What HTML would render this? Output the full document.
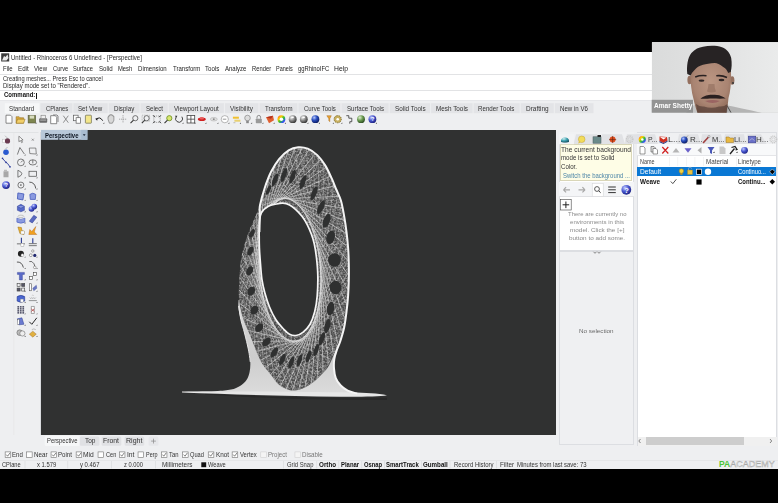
<!DOCTYPE html>
<html><head><meta charset="utf-8">
<style>
*{box-sizing:border-box;margin:0;padding:0}
html,body{width:778px;height:503px;overflow:hidden;background:#000}
body{position:relative;font-family:"Liberation Sans",sans-serif;color:#1a1a1a}
.a{position:absolute}
.t{position:absolute;white-space:nowrap;line-height:1;transform-origin:0 0}
svg{position:absolute;left:0;top:0}
</style></head><body>
<!-- app background -->
<div class="a" style="left:0;top:52px;width:778px;height:416.5px;background:#eeeff1"></div>
<!-- title + menu -->
<div class="a" style="left:0;top:52px;width:778px;height:21.5px;background:#fff"></div>
<!-- command area -->
<div class="a" style="left:0;top:73.5px;width:778px;height:27px;background:#fff"></div>
<div class="a" style="left:0;top:73.5px;width:778px;height:1px;background:#e2e3e5"></div>
<div class="a" style="left:0;top:89.5px;width:778px;height:1px;background:#e2e3e5"></div>
<div class="a" style="left:0;top:100px;width:778px;height:1px;background:#e6e7ea"></div>
<div class="a" style="left:36.3px;top:92.5px;width:0.8px;height:6.5px;background:#111"></div>
<!-- toolbar tabs -->
<div id="tabs"></div>
<!-- viewport -->
<div class="a" style="left:41px;top:130.2px;width:514.5px;height:304.8px;background:#303131"></div>
<!-- panel 1 -->
<div class="a" style="left:558.5px;top:132.3px;width:75.5px;height:118.7px;background:#fff;border:1px solid #dcdee2"></div>
<div class="a" style="left:558.5px;top:132.3px;width:75.5px;height:12px;background:#f0f1f3"></div>
<div class="a" style="left:560.3px;top:144.4px;width:72.2px;height:36.2px;background:#fefde6;border:1px solid #d9d6b8"></div>
<div class="a" style="left:559px;top:181.5px;width:74.5px;height:15.5px;background:#f4f5f7;border-bottom:1px solid #e0e1e4"></div>
<div class="a" style="left:558.5px;top:251px;width:75.5px;height:193.5px;background:#eff0f2;border:1px solid #dcdee2"></div>
<!-- panel 2 -->
<div class="a" style="left:636.7px;top:132.3px;width:140.3px;height:313.5px;background:#fff;border:1px solid #dcdee2"></div>
<div class="a" style="left:637.2px;top:132.8px;width:139.3px;height:11.2px;background:#eff0f2"></div>
<div class="a" style="left:637.2px;top:144px;width:139.3px;height:11.6px;background:#f8f9fa;border-bottom:0.6px solid #e4e5e8"></div>
<div class="a" style="left:636.7px;top:167.2px;width:139.5px;height:9.3px;background:#0a78d4"></div>
<div class="a" style="left:637.5px;top:437px;width:139px;height:8.5px;background:#f0f0f0"></div>
<div class="a" style="left:646px;top:437.3px;width:97.7px;height:7.5px;background:#cdcdcd"></div>
<!-- webcam -->
<div class="a" style="left:651.7px;top:42.2px;width:126.3px;height:70.5px;overflow:hidden;background:#dadbdb">
</div>
<svg id="ov" width="778" height="503" viewBox="0 0 778 503"><defs>
<radialGradient id="gs" cx="0.35" cy="0.3" r="0.75"><stop offset="0" stop-color="#f4f4f4"/><stop offset="0.5" stop-color="#8a8a8a"/><stop offset="1" stop-color="#303030"/></radialGradient>
<radialGradient id="bs" cx="0.35" cy="0.3" r="0.75"><stop offset="0" stop-color="#b8c8ff"/><stop offset="0.45" stop-color="#2a4fc0"/><stop offset="1" stop-color="#0a1a60"/></radialGradient>
<radialGradient id="hs" cx="0.35" cy="0.3" r="0.75"><stop offset="0" stop-color="#c0c8ff"/><stop offset="0.5" stop-color="#4a58d0"/><stop offset="1" stop-color="#1a2080"/></radialGradient>
<radialGradient id="grs" cx="0.35" cy="0.3" r="0.75"><stop offset="0" stop-color="#e0f0d0"/><stop offset="0.5" stop-color="#6a9a50"/><stop offset="1" stop-color="#2a4a20"/></radialGradient>
<radialGradient id="ts" cx="0.35" cy="0.3" r="0.8"><stop offset="0" stop-color="#d0f0f0"/><stop offset="0.5" stop-color="#3aa0b0"/><stop offset="1" stop-color="#1a5060"/></radialGradient>
<linearGradient id="rb" x1="0" y1="0" x2="1" y2="1"><stop offset="0" stop-color="#ff3030"/><stop offset="0.3" stop-color="#ffd000"/><stop offset="0.55" stop-color="#30c030"/><stop offset="0.8" stop-color="#3050ff"/><stop offset="1" stop-color="#c030c0"/></linearGradient>
</defs>
<path d="M6.00 115.20 H10.50 L12.00 116.70 V123.20 H6.00 Z" fill="#fff" stroke="#5a5a5a" stroke-width="0.7"/>
<path d="M16.10 116.70 h3 l1 1 h3.5 v5.5 h-7.5 Z" fill="#d9a83a" stroke="#8a6a20" stroke-width="0.5"/>
<path d="M16.10 123.20 l1.5 -4 h7.5 l-1.5 4 Z" fill="#f2cf6a" stroke="#8a6a20" stroke-width="0.5"/>
<rect x="28.10" y="115.40" width="7.6" height="7.6" fill="#7e8650" stroke="#4a4a30" stroke-width="0.5"/>
<rect x="29.70" y="115.60" width="4.4" height="3" fill="#d8dcc0"/>
<path d="M35.10 123.80 L36.50 122.40 L36.50 123.80 Z" fill="#444"/>
<rect x="39.20" y="118.20" width="8" height="4.5" rx="1" fill="#6a6a6a"/>
<rect x="41.00" y="115.20" width="4.4" height="3.5" fill="#eee" stroke="#666" stroke-width="0.5"/>
<rect x="40.20" y="119.50" width="6" height="1.2" fill="#aaa"/>
<path d="M53.00 115.00 h4 l1 1 v6" fill="none" stroke="#5a5a5a" stroke-width="0.7"/>
<path d="M50.70 115.70 H55.20 L56.70 117.20 V123.70 H50.70 Z" fill="#fff" stroke="#5a5a5a" stroke-width="0.7"/>
<path d="M63.30 115.70 L68.30 122.70 M68.30 115.70 L63.30 122.70" stroke="#777" stroke-width="0.8"/>
<rect x="73.60" y="115.20" width="4.5" height="5.5" fill="#fff" stroke="#5a5a5a" stroke-width="0.7"/>
<rect x="76.10" y="117.70" width="4.5" height="5.5" fill="#fff" stroke="#5a5a5a" stroke-width="0.7"/>
<rect x="85.40" y="115.20" width="6" height="8" rx="0.6" fill="#f3e68a" stroke="#6a6a50" stroke-width="0.7"/>
<path d="M96.20 119.70 Q99.70 115.70 102.70 120.70" fill="none" stroke="#222" stroke-width="1"/>
<path d="M95.20 118.70 l2.5 -1 l-0.5 3 Z" fill="#222"/>
<path d="M102.90 123.80 L104.30 122.40 L104.30 123.80 Z" fill="#444"/>
<path d="M108.00 119.20 v-2.5 h1 v-1.5 h1.3 v-0.5 h1.3 v0.5 h1.3 v1 h1 v4 l-1.5 3 h-3 Z" fill="#d8d8d8" stroke="#666" stroke-width="0.6"/>
<path d="M123.00 115.20 V123.20 M119.00 119.20 H127.00" stroke="#888" stroke-width="0.7" stroke-dasharray="1.2 0.8"/>
<circle cx="135.30" cy="118.20" r="2.6" fill="none" stroke="#555" stroke-width="0.8"/>
<path d="M133.50 120.10 L130.50 123.10" stroke="#333" stroke-width="1.1"/>
<circle cx="146.60" cy="118.20" r="2.6" fill="none" stroke="#555" stroke-width="0.8"/>
<path d="M144.80 120.10 L141.80 123.10" stroke="#333" stroke-width="1.1"/>
<rect x="142.10" y="115.20" width="7.5" height="6" fill="none" stroke="#888" stroke-width="0.5" stroke-dasharray="1 0.7"/>
<rect x="153.80" y="116.00" width="6.4" height="6.4" fill="none" stroke="#777" stroke-width="0.6" stroke-dasharray="1.2 0.8"/>
<path d="M153.00 115.20 l2 2 M161.00 115.20 l-2 2 M153.00 123.20 l2 -2 M161.00 123.20 l-2 -2" stroke="#333" stroke-width="0.9"/>
<circle cx="169.30" cy="118.20" r="2.6" fill="#d8e870" stroke="#6a8a20" stroke-width="0.8"/>
<path d="M167.50 120.10 L164.50 123.10" stroke="#333" stroke-width="1.1"/>
<path d="M175.90 117.20 A3.5 3.5 0 1 0 181.90 116.70" fill="none" stroke="#333" stroke-width="0.9"/>
<path d="M174.90 115.70 l2.5 0 l-1 2 Z" fill="#333"/>
<path d="M182.10 123.80 L183.50 122.40 L183.50 123.80 Z" fill="#444"/>
<rect x="187.10" y="115.40" width="7.6" height="7.6" fill="#fff" stroke="#444" stroke-width="0.8"/>
<path d="M190.90 115.40 V123.00 M187.10 119.20 H194.70" stroke="#444" stroke-width="0.8"/>
<path d="M194.10 123.80 L195.50 122.40 L195.50 123.80 Z" fill="#444"/>
<ellipse cx="201.80" cy="119.20" rx="4" ry="1.8" fill="#d02020"/>
<ellipse cx="201.80" cy="118.20" rx="2.2" ry="1.3" fill="#e86060"/>
<path d="M205.00 123.80 L206.40 122.40 L206.40 123.80 Z" fill="#444"/>
<ellipse cx="213.80" cy="119.20" rx="3.5" ry="1.8" fill="#ddd" stroke="#aaa" stroke-width="0.5"/>
<circle cx="213.80" cy="119.20" r="0.9" fill="#888"/>
<path d="M217.00 123.80 L218.40 122.40 L218.40 123.80 Z" fill="#444"/>
<circle cx="224.80" cy="119.20" r="3.6" fill="#fff" stroke="#888" stroke-width="0.6"/>
<path d="M222.80 119.20 H226.30" stroke="#555" stroke-width="0.6"/>
<path d="M228.00 123.80 L229.40 122.40 L229.40 123.80 Z" fill="#444"/>
<rect x="232.90" y="116.70" width="6" height="2" fill="#f0c030"/>
<rect x="234.40" y="119.70" width="6" height="2" fill="#e8d070"/>
<path d="M233.40 122.70 h2" stroke="#999" stroke-width="0.6"/>
<path d="M239.60 123.80 L241.00 122.40 L241.00 123.80 Z" fill="#444"/>
<circle cx="247.50" cy="118.00" r="2.8" fill="#ddd" stroke="#777" stroke-width="0.6"/>
<rect x="246.20" y="120.70" width="2.6" height="2.5" fill="#888"/>
<path d="M250.70 123.80 L252.10 122.40 L252.10 123.80 Z" fill="#444"/>
<path d="M257.00 118.70 v-1.5 a1.8 1.8 0 0 1 3.6 0 v1.5" fill="none" stroke="#777" stroke-width="0.8"/>
<rect x="255.80" y="118.70" width="6" height="4.5" rx="0.6" fill="#9a9a9a"/>
<path d="M262.00 123.80 L263.40 122.40 L263.40 123.80 Z" fill="#444"/>
<path d="M266.00 117.20 L273.00 115.70 L274.00 120.20 L269.00 123.20 Z" fill="#e06030"/>
<path d="M266.00 117.20 L273.00 115.70 L271.00 118.70 Z" fill="#b03020"/>
<path d="M273.20 123.80 L274.60 122.40 L274.60 123.80 Z" fill="#444"/>
<circle cx="281.40" cy="119.20" r="3.9" fill="url(#rb)"/>
<circle cx="281.40" cy="119.20" r="1.8" fill="#fff"/>
<path d="M284.60 123.80 L286.00 122.40 L286.00 123.80 Z" fill="#444"/>
<circle cx="292.70" cy="119.20" r="3.9" fill="url(#gs)"/>
<rect x="291.70" y="116.60" width="2" height="1.4" fill="#fff"/>
<circle cx="303.80" cy="119.20" r="3.9" fill="url(#gs)"/>
<rect x="302.80" y="116.60" width="2" height="1.4" fill="#fff"/>
<path d="M307.00 123.80 L308.40 122.40 L308.40 123.80 Z" fill="#444"/>
<circle cx="315.40" cy="119.20" r="3.9" fill="url(#bs)"/>
<path d="M318.60 123.80 L320.00 122.40 L320.00 123.80 Z" fill="#444"/>
<path d="M326.80 115.70 h4.5 l-1.5 3 v3 l-1 -1 v-2 Z" fill="#e8a030" stroke="#a06010" stroke-width="0.4"/>
<path d="M332.50 123.80 L333.90 122.40 L333.90 123.80 Z" fill="#444"/>
<circle cx="337.70" cy="119.20" r="3.6" fill="#c8b060" stroke="#7a6a30" stroke-width="1" stroke-dasharray="1 0.8"/>
<circle cx="337.70" cy="119.20" r="1.3" fill="#fff"/>
<path d="M340.90 123.80 L342.30 122.40 L342.30 123.80 Z" fill="#444"/>
<path d="M346.30 115.70 h2.5 v2.5 h3 v3.5 h-2 v2" fill="none" stroke="#333" stroke-width="0.8"/>
<circle cx="361.00" cy="119.20" r="3.9" fill="url(#grs)"/>
<circle cx="372.40" cy="119.20" r="3.9" fill="url(#hs)"/>
<text x="370.90" y="121.30" font-size="5.6" font-weight="bold" fill="#fff" font-family="Liberation Sans">?</text>
<path d="M375.60 123.80 L377.00 122.40 L377.00 123.80 Z" fill="#444"/>
<rect x="2.5" y="139.2" width="4" height="3.5" fill="#fff" stroke="#bbb" stroke-width="0.5"/>
<circle cx="7.5" cy="140.89999999999998" r="2.6" fill="#6a3a50"/>
<path d="M5.0 135.7 l2 2 l-1 1.5" stroke="#999" stroke-width="0.6" fill="none"/>
<circle cx="6.0" cy="152.24999999999997" r="2.8" fill="#2a5ad0"/>
<path d="M4.5 150.04999999999998 l3 -3" stroke="#bbb" stroke-width="1"/>
<path d="M2.5 158.39999999999998 L6.0 162.39999999999998 L7.5 163.39999999999998 L10.0 166.89999999999998" fill="none" stroke="#2a3a9a" stroke-width="0.9"/>
<circle cx="2.5" cy="158.39999999999998" r="0.8" fill="#2a3a9a"/><circle cx="6.0" cy="162.39999999999998" r="0.8" fill="#2a3a9a"/><circle cx="10.0" cy="166.89999999999998" r="0.8" fill="#2a3a9a"/>
<rect x="3.5" y="171.25" width="5" height="6" fill="#a8a8a8"/><rect x="4.0" y="169.75" width="3" height="1.3" fill="#bbb"/>
<circle cx="6.0" cy="185.1" r="3.9" fill="url(#hs)"/>
<text x="4.5" y="187.2" font-size="5.6" font-weight="bold" fill="#fff" font-family="Liberation Sans">?</text>
<path d="M18.9 136.2 L18.9 141.7 L20.4 140.5 L21.7 142.7 L22.5 142.2 L21.4 140.2 L23.099999999999998 140.0 Z" fill="#fff" stroke="#4a4a4a" stroke-width="0.6"/>
<path d="M31.799999999999997 138.7 l2 2 M33.8 138.7 l-2 2" stroke="#666" stroke-width="0.6"/>
<path d="M17.4 154.54999999999998 L19.9 147.54999999999998 L24.4 154.04999999999998" fill="none" stroke="#4a4a4a" stroke-width="0.7"/>
<path d="M29.299999999999997 148.04999999999998 L35.8 148.04999999999998 L36.3 154.04999999999998 L29.799999999999997 153.54999999999998 Z" fill="none" stroke="#4a4a4a" stroke-width="0.6"/>
<path d="M24.30 155.45 L25.50 154.25 L25.50 155.45 Z" fill="#333"/>
<path d="M36.20 155.45 L37.40 154.25 L37.40 155.45 Z" fill="#333"/>
<circle cx="20.9" cy="162.39999999999998" r="3.4" fill="none" stroke="#4a4a4a" stroke-width="0.7"/>
<path d="M20.9 162.39999999999998 l2 -2" fill="none" stroke="#4a4a4a" stroke-width="0.7"/>
<ellipse cx="32.8" cy="162.39999999999998" rx="3.8" ry="2.6" fill="none" stroke="#4a4a4a" stroke-width="0.7"/>
<path d="M32.8 159.79999999999998 V163.39999999999998" fill="none" stroke="#4a4a4a" stroke-width="0.7"/>
<path d="M24.30 166.80 L25.50 165.60 L25.50 166.80 Z" fill="#333"/>
<path d="M36.20 166.80 L37.40 165.60 L37.40 166.80 Z" fill="#333"/>
<path d="M17.9 170.25 V177.25 Q25.9 173.75 17.9 170.25" fill="none" stroke="#4a4a4a" stroke-width="0.7"/>
<rect x="28.999999999999996" y="171.25" width="7.6" height="5" fill="none" stroke="#4a4a4a" stroke-width="0.7"/>
<path d="M24.30 178.15 L25.50 176.95 L25.50 178.15 Z" fill="#333"/>
<path d="M36.20 178.15 L37.40 176.95 L37.40 178.15 Z" fill="#333"/>
<circle cx="20.9" cy="185.1" r="3" fill="none" stroke="#4a4a4a" stroke-width="0.7"/><circle cx="20.9" cy="185.1" r="0.8" fill="#4a4a4a"/>
<path d="M29.299999999999997 182.1 Q34.8 182.1 35.8 188.6" fill="none" stroke="#4a4a4a" stroke-width="0.9"/>
<path d="M24.30 189.50 L25.50 188.30 L25.50 189.50 Z" fill="#333"/>
<path d="M36.20 189.50 L37.40 188.30 L37.40 189.50 Z" fill="#333"/>
<path d="M17.9 192.95 L23.9 193.95 L22.9 199.95 L17.4 198.95 Z" fill="#8a9ae0" stroke="#3f55b8" stroke-width="0.8"/>
<path d="M29.799999999999997 194.45 Q32.8 191.95 35.8 194.45 L35.3 199.45 L30.299999999999997 199.45 Z" fill="#8a9ae0" stroke="#3f55b8" stroke-width="0.7"/>
<path d="M24.30 200.85 L25.50 199.65 L25.50 200.85 Z" fill="#333"/>
<path d="M36.20 200.85 L37.40 199.65 L37.40 200.85 Z" fill="#333"/>
<path d="M17.4 206.29999999999998 L20.9 204.29999999999998 L24.4 206.29999999999998 V210.29999999999998 L20.9 211.79999999999998 L17.4 210.29999999999998 Z" fill="#5468c8" stroke="#2a3a90" stroke-width="0.5"/>
<path d="M17.4 206.29999999999998 L20.9 208.1 L24.4 206.29999999999998" fill="#9aa8e8" stroke="#2a3a90" stroke-width="0.4"/>
<circle cx="31.499999999999996" cy="208.99999999999997" r="2.8" fill="url(#hs)"/><circle cx="34.3" cy="206.6" r="2.8" fill="url(#hs)"/>
<path d="M24.30 212.20 L25.50 211.00 L25.50 212.20 Z" fill="#333"/>
<path d="M36.20 212.20 L37.40 211.00 L37.40 212.20 Z" fill="#333"/>
<ellipse cx="20.9" cy="216.34999999999997" rx="3" ry="1.2" fill="none" stroke="#aaa" stroke-width="0.6"/>
<path d="M16.9 218.14999999999998 Q20.9 220.64999999999998 24.9 218.14999999999998 V222.14999999999998 Q20.9 224.14999999999998 16.9 222.14999999999998 Z" fill="#8a9ae0" stroke="#3f55b8" stroke-width="0.6"/>
<path d="M29.299999999999997 221.14999999999998 L33.8 215.34999999999997 L36.8 217.14999999999998 L32.3 222.95 Z" fill="#5a6ac0" stroke="#2a3a90" stroke-width="0.5"/>
<path d="M24.30 223.55 L25.50 222.35 L25.50 223.55 Z" fill="#333"/>
<path d="M36.20 223.55 L37.40 222.35 L37.40 223.55 Z" fill="#333"/>
<path d="M17.9 227.0 L21.4 227.5 L21.9 230.5 L24.4 231.5 L23.9 234.5 L19.9 233.5 Z" fill="#e8b030" stroke="#a07010" stroke-width="0.5"/>
<rect x="20.9" y="231.0" width="3.5" height="3" fill="#fff" stroke="#999" stroke-width="0.4"/>
<path d="M28.799999999999997 234.5 L29.799999999999997 229.5 L31.799999999999997 231.5 L35.8 226.5 L34.3 232.0 L36.8 234.5 Z" fill="#f0a020" stroke="#b06010" stroke-width="0.4"/>
<path d="M21.4 237.84999999999997 V243.34999999999997" fill="none" stroke="#2a3a90" stroke-width="1.1"/>
<path d="M16.9 243.84999999999997 H24.9" fill="none" stroke="#555" stroke-width="0.8"/>
<rect x="20.9" y="243.34999999999997" width="3" height="3" fill="#fff" stroke="#888" stroke-width="0.4"/>
<path d="M32.8 238.34999999999997 V243.34999999999997" fill="none" stroke="#2a3a90" stroke-width="1.1"/>
<path d="M28.799999999999997 243.64999999999998 H36.8 M28.799999999999997 245.64999999999998 H36.8" fill="none" stroke="#444" stroke-width="0.7"/>
<circle cx="20.9" cy="253.7" r="3" fill="#222"/><circle cx="22.4" cy="255.2" r="1.4" fill="#fff" stroke="#888" stroke-width="0.4"/>
<circle cx="30.799999999999997" cy="255.2" r="1.4" fill="#fff" stroke="#555" stroke-width="0.5"/><circle cx="34.8" cy="255.39999999999998" r="1.6" fill="#222a70"/><circle cx="32.8" cy="251.0" r="1.2" fill="#fff" stroke="#555" stroke-width="0.5"/>
<path d="M24.30 257.60 L25.50 256.40 L25.50 257.60 Z" fill="#333"/>
<path d="M36.20 257.60 L37.40 256.40 L37.40 257.60 Z" fill="#333"/>
<path d="M16.9 262.04999999999995 Q21.9 261.54999999999995 23.4 267.54999999999995" fill="none" stroke="#4a4a4a" stroke-width="0.9"/>
<path d="M29.299999999999997 261.54999999999995 L31.799999999999997 261.54999999999995 Q34.8 263.54999999999995 34.8 266.54999999999995" fill="none" stroke="#4a4a4a" stroke-width="0.8"/>
<circle cx="34.8" cy="267.34999999999997" r="1.3" fill="#fff" stroke="#555" stroke-width="0.5"/>
<path d="M24.30 268.95 L25.50 267.75 L25.50 268.95 Z" fill="#333"/>
<path d="M36.20 268.95 L37.40 267.75 L37.40 268.95 Z" fill="#333"/>
<path d="M17.4 272.4 H24.4 V274.4 H22.4 V279.9 H19.4 V274.4 H17.4 Z" fill="#5a6ac8" stroke="#2a3a90" stroke-width="0.4"/>
<rect x="29.299999999999997" y="276.4" width="3" height="3" fill="#fff" stroke="#444" stroke-width="0.6"/><rect x="33.3" y="272.4" width="3" height="3" fill="#fff" stroke="#444" stroke-width="0.6"/>
<path d="M32.3 276.4 L33.3 275.4" fill="none" stroke="#4a4a4a" stroke-width="0.5"/>
<path d="M24.30 280.30 L25.50 279.10 L25.50 280.30 Z" fill="#333"/>
<path d="M36.20 280.30 L37.40 279.10 L37.40 280.30 Z" fill="#333"/>
<rect x="17.099999999999998" y="283.45" width="3" height="3" fill="none" stroke="#444" stroke-width="0.6"/><rect x="21.7" y="283.45" width="3" height="3" fill="#556" stroke="#444" stroke-width="0.6"/><rect x="17.099999999999998" y="288.05" width="3" height="3" fill="#556" stroke="#444" stroke-width="0.6"/><rect x="21.7" y="288.05" width="3" height="3" fill="none" stroke="#444" stroke-width="0.6"/>
<rect x="29.299999999999997" y="283.75" width="2.2" height="7" fill="#fff" stroke="#555" stroke-width="0.6"/>
<path d="M32.8 288.25 L36.3 285.25 L36.8 288.25 L33.8 290.75 Z" fill="#6a78c8" stroke="#3a4a90" stroke-width="0.4"/>
<path d="M24.30 291.65 L25.50 290.45 L25.50 291.65 Z" fill="#333"/>
<path d="M36.20 291.65 L37.40 290.45 L37.40 291.65 Z" fill="#333"/>
<path d="M17.099999999999998 296.6 Q20.9 294.1 24.7 296.6 V301.1 Q20.9 303.6 17.099999999999998 301.1 Z" fill="#4a66d0" stroke="#1a2a80" stroke-width="0.5"/>
<rect x="20.4" y="299.1" width="3" height="3" fill="#fff" stroke="#888" stroke-width="0.4"/>
<path d="M28.799999999999997 300.6 H36.8" fill="none" stroke="#555" stroke-width="0.6"/>
<path d="M29.799999999999997 297.6 l1 1 l1 -1 l1 1 l1 -1 l1 1 l1 -1" fill="none" stroke="#777" stroke-width="0.5"/>
<path d="M31.799999999999997 295.6 Q32.8 294.6 33.8 295.6" fill="none" stroke="#aaa" stroke-width="0.5"/>
<path d="M24.30 303.00 L25.50 301.80 L25.50 303.00 Z" fill="#333"/>
<path d="M36.20 303.00 L37.40 301.80 L37.40 303.00 Z" fill="#333"/>
<rect x="17.4" y="306.1" width="1.7" height="1.5" fill="#4a4a60"/>
<rect x="17.4" y="308.1" width="1.7" height="1.5" fill="#4a4a60"/>
<rect x="17.4" y="310.1" width="1.7" height="1.5" fill="#4a4a60"/>
<rect x="17.4" y="312.1" width="1.7" height="1.5" fill="#4a4a60"/>
<rect x="19.9" y="306.1" width="1.7" height="1.5" fill="#4a4a60"/>
<rect x="19.9" y="308.1" width="1.7" height="1.5" fill="#4a4a60"/>
<rect x="19.9" y="310.1" width="1.7" height="1.5" fill="#4a4a60"/>
<rect x="19.9" y="312.1" width="1.7" height="1.5" fill="#4a4a60"/>
<rect x="22.4" y="306.1" width="1.7" height="1.5" fill="#4a4a60"/>
<rect x="22.4" y="308.1" width="1.7" height="1.5" fill="#4a4a60"/>
<rect x="22.4" y="310.1" width="1.7" height="1.5" fill="#4a4a60"/>
<rect x="22.4" y="312.1" width="1.7" height="1.5" fill="#4a4a60"/>
<path d="M31.299999999999997 306.45 H34.3 V313.45 H31.299999999999997 Z" fill="#fff" stroke="#555" stroke-width="0.5"/>
<path d="M31.299999999999997 308.95 L34.3 311.45 M31.299999999999997 311.45 L34.3 308.95" fill="none" stroke="#b03030" stroke-width="0.7"/>
<path d="M24.30 314.35 L25.50 313.15 L25.50 314.35 Z" fill="#333"/>
<path d="M36.20 314.35 L37.40 313.15 L37.40 314.35 Z" fill="#333"/>
<path d="M17.4 318.79999999999995 L21.9 317.79999999999995 L23.9 324.29999999999995 L18.9 324.79999999999995 Z" fill="#6a7ad0" stroke="#2a3a90" stroke-width="0.5"/>
<rect x="17.4" y="319.29999999999995" width="1.8" height="5" fill="#fff" stroke="#555" stroke-width="0.4"/>
<path d="M29.299999999999997 321.79999999999995 L31.799999999999997 324.29999999999995 L36.8 317.79999999999995" fill="none" stroke="#111" stroke-width="0.9"/>
<path d="M24.30 325.70 L25.50 324.50 L25.50 325.70 Z" fill="#333"/>
<path d="M36.20 325.70 L37.40 324.50 L37.40 325.70 Z" fill="#333"/>
<circle cx="19.7" cy="332.65" r="2.8" fill="#bbb" stroke="#555" stroke-width="0.5"/><circle cx="22.4" cy="333.45" r="2.6" fill="#eee" stroke="#555" stroke-width="0.5"/>
<path d="M29.299999999999997 334.15 L32.8 331.15 L36.3 334.15 L32.8 337.15 Z" fill="#e0b040" stroke="#906020" stroke-width="0.4"/>
<path d="M31.799999999999997 329.65 Q33.8 328.15 35.8 329.65" fill="none" stroke="#888" stroke-width="0.5"/>
<path d="M24.30 337.05 L25.50 335.85 L25.50 337.05 Z" fill="#333"/>
<path d="M36.20 337.05 L37.40 335.85 L37.40 337.05 Z" fill="#333"/>
<rect x="0" y="132.1" width="38.5" height="0.6" fill="#d9dadd"/>
<rect x="40" y="132" width="0.8" height="303" fill="#d4d6da"/>
<rect x="13.6" y="133" width="0.6" height="302" fill="#e3e4e7"/>
<rect x="1.2" y="53.3" width="8" height="8.2" fill="#3a3a3a"/>
<path d="M2 60.5 L4 56 L5.5 57 L7.5 54.5 L8.5 58 L6.5 60.5 Z" fill="#e8e8e8"/>
<text x="719" y="466.8" font-family="Liberation Sans" font-weight="bold" font-size="9.2" fill="#4cc436" textLength="11.2" lengthAdjust="spacingAndGlyphs">PA</text>
<text x="730.3" y="466.8" font-family="Liberation Sans" font-size="9.2" fill="#ffffff" stroke="#a8a8a8" stroke-width="0.45" textLength="44.5" lengthAdjust="spacingAndGlyphs">ACADEMY</text>
<defs>
<linearGradient id="flare" x1="0" y1="0" x2="0" y2="1"><stop offset="0" stop-color="#d8d8d8"/><stop offset="0.6" stop-color="#cdcdcd"/><stop offset="1" stop-color="#dcdcdc"/></linearGradient>
</defs>
<path d="M238.60 300.00 C238.58 301.43 238.12 305.30 238.50 308.60 C238.88 311.90 239.90 315.73 240.90 319.80 C241.90 323.87 243.23 327.97 244.50 333.00 C245.77 338.03 247.53 345.17 248.50 350.00 C249.47 354.83 250.12 358.33 250.30 362.00 C250.48 365.67 250.23 369.00 249.60 372.00 C248.97 375.00 248.10 377.67 246.50 380.00 C244.90 382.33 242.58 384.40 240.00 386.00 C237.42 387.60 235.17 388.73 231.00 389.60 C226.83 390.47 223.17 390.82 215.00 391.20 C206.83 391.58 187.50 391.78 182.00 391.90  L372 395.2 C369.53 394.93 361.25 394.35 357.20 393.60 C353.15 392.85 350.48 392.08 347.70 390.70 C344.92 389.32 342.48 387.38 340.50 385.30 C338.52 383.22 336.88 380.98 335.80 378.20 C334.72 375.42 334.25 371.80 334.00 368.60 C333.75 365.40 333.80 362.18 334.30 359.00 C334.80 355.82 335.97 352.67 337.00 349.50 C338.03 346.33 339.32 343.63 340.50 340.00 C341.68 336.37 343.10 332.40 344.10 327.70 C345.10 323.00 345.83 316.42 346.50 311.80 C347.17 307.18 347.83 301.97 348.10 300.00  Z" fill="url(#flare)"/>
<path d="M205 393.5 C260 396.5 330 398.5 387 397.8 L387 400 C330 400.5 260 398.5 205 394.5Z" fill="#1f2020" opacity="0.5"/>
<path d="M182 391.5 C230 391.3 300 391.8 352 392.6 C365 392.8 378 393.2 387 395.3 C380 396.6 360 397 340 396.8 C280 396 230 394.2 182 392.5 Z" fill="#e6e6e6"/>
<clipPath id="ringclip"><path d="M260.00 205.20 C261.10 201.48 262.95 193.27 264.80 187.70 C266.65 182.13 268.72 176.57 271.10 171.80 C273.48 167.03 276.18 162.68 279.10 159.10 C282.02 155.52 285.42 152.28 288.60 150.30 C291.78 148.32 295.02 147.47 298.20 147.20 C301.38 146.93 304.52 147.38 307.70 148.70 C310.88 150.02 314.38 152.32 317.30 155.10 C320.22 157.88 322.82 161.55 325.20 165.40 C327.58 169.25 329.75 174.18 331.60 178.20 C333.45 182.22 334.75 185.78 336.30 189.50 C337.85 193.22 339.60 196.10 340.90 200.50 C342.20 204.90 343.17 210.68 344.10 215.90 C345.03 221.12 345.83 226.50 346.50 231.80 C347.17 237.10 347.72 242.40 348.10 247.70 C348.48 253.00 348.68 258.22 348.80 263.60 C348.92 268.98 348.92 274.62 348.80 280.00 C348.68 285.38 348.48 290.60 348.10 295.90 C347.72 301.20 347.17 306.50 346.50 311.80 C345.83 317.10 345.18 322.67 344.10 327.70 C343.02 332.73 341.58 337.77 340.00 342.00 C338.42 346.23 336.50 349.07 334.60 353.10 C332.70 357.13 330.98 362.42 328.60 366.20 C326.22 369.98 323.28 372.82 320.30 375.80 C317.32 378.78 314.08 381.82 310.70 384.10 C307.32 386.38 303.45 388.48 300.00 389.50 C296.55 390.52 293.55 391.03 290.00 390.20 C286.45 389.37 281.92 387.12 278.70 384.50 C275.48 381.88 273.35 377.82 270.70 374.50 C268.05 371.18 264.95 367.92 262.80 364.60 C260.65 361.28 259.95 359.57 257.80 354.60 C255.65 349.63 252.20 340.40 249.90 334.80 C247.60 329.20 245.57 325.37 244.00 321.00 C242.43 316.63 241.37 312.78 240.50 308.60 C239.63 304.42 239.00 300.67 238.80 295.90 C238.60 291.13 238.95 285.92 239.30 280.00 C239.65 274.08 240.10 266.05 240.90 260.40 C241.70 254.75 242.77 250.87 244.10 246.10 C245.43 241.33 247.32 236.03 248.90 231.80 C250.48 227.57 252.05 224.33 253.60 220.70 C255.15 217.07 257.13 212.58 258.20 210.00 C259.27 207.42 258.90 208.92 260.00 205.20 Z"/></clipPath>
<filter id="nz" x="0" y="0" width="1" height="1"><feTurbulence type="fractalNoise" baseFrequency="0.55" numOctaves="2" seed="7"/><feColorMatrix type="matrix" values="0 0 0 0 0.85  0 0 0 0 0.85  0 0 0 0 0.85  1.3 0 0 0 -0.5"/></filter>
<path d="M260.00 205.20 C261.10 201.48 262.95 193.27 264.80 187.70 C266.65 182.13 268.72 176.57 271.10 171.80 C273.48 167.03 276.18 162.68 279.10 159.10 C282.02 155.52 285.42 152.28 288.60 150.30 C291.78 148.32 295.02 147.47 298.20 147.20 C301.38 146.93 304.52 147.38 307.70 148.70 C310.88 150.02 314.38 152.32 317.30 155.10 C320.22 157.88 322.82 161.55 325.20 165.40 C327.58 169.25 329.75 174.18 331.60 178.20 C333.45 182.22 334.75 185.78 336.30 189.50 C337.85 193.22 339.60 196.10 340.90 200.50 C342.20 204.90 343.17 210.68 344.10 215.90 C345.03 221.12 345.83 226.50 346.50 231.80 C347.17 237.10 347.72 242.40 348.10 247.70 C348.48 253.00 348.68 258.22 348.80 263.60 C348.92 268.98 348.92 274.62 348.80 280.00 C348.68 285.38 348.48 290.60 348.10 295.90 C347.72 301.20 347.17 306.50 346.50 311.80 C345.83 317.10 345.18 322.67 344.10 327.70 C343.02 332.73 341.58 337.77 340.00 342.00 C338.42 346.23 336.50 349.07 334.60 353.10 C332.70 357.13 330.98 362.42 328.60 366.20 C326.22 369.98 323.28 372.82 320.30 375.80 C317.32 378.78 314.08 381.82 310.70 384.10 C307.32 386.38 303.45 388.48 300.00 389.50 C296.55 390.52 293.55 391.03 290.00 390.20 C286.45 389.37 281.92 387.12 278.70 384.50 C275.48 381.88 273.35 377.82 270.70 374.50 C268.05 371.18 264.95 367.92 262.80 364.60 C260.65 361.28 259.95 359.57 257.80 354.60 C255.65 349.63 252.20 340.40 249.90 334.80 C247.60 329.20 245.57 325.37 244.00 321.00 C242.43 316.63 241.37 312.78 240.50 308.60 C239.63 304.42 239.00 300.67 238.80 295.90 C238.60 291.13 238.95 285.92 239.30 280.00 C239.65 274.08 240.10 266.05 240.90 260.40 C241.70 254.75 242.77 250.87 244.10 246.10 C245.43 241.33 247.32 236.03 248.90 231.80 C250.48 227.57 252.05 224.33 253.60 220.70 C255.15 217.07 257.13 212.58 258.20 210.00 C259.27 207.42 258.90 208.92 260.00 205.20 Z" fill="#4c4c4c"/>
<g clip-path="url(#ringclip)"><rect x="236" y="145" width="116" height="250" filter="url(#nz)"/></g>
<g clip-path="url(#ringclip)"><path d="M299.4 146.3L315.8 238.1M305.8 148.1L317.8 245.9M312.1 151.5L319.5 254.0M318.1 156.5L320.7 262.3M323.9 163.0L321.5 270.7M329.2 170.9L321.9 279.1M334.0 180.2L321.8 287.4M338.3 190.7L321.3 295.4M342.0 202.2L320.4 303.1M345.0 214.7L319.0 310.4M347.3 227.9L317.2 317.1M349.0 241.6L315.1 323.2M349.9 255.7L312.6 328.5M350.0 270.0L309.8 333.1M349.4 284.2L306.7 336.7M348.0 298.3L303.3 339.5M345.9 312.0L299.8 341.4M343.1 325.1L296.2 342.3M339.6 337.4L292.4 342.2M335.5 348.8L288.6 341.1M330.9 359.1L284.8 339.1M325.7 368.2L281.0 336.1M320.1 376.0L277.4 332.2M314.2 382.3L273.9 327.5M308.0 387.1L270.7 322.0M301.6 390.3L267.7 315.8M295.1 391.8L264.9 309.0M288.6 391.7L262.5 301.7M282.2 389.9L260.5 293.9M275.9 386.5L258.8 285.8M269.9 381.5L257.6 277.5M264.1 375.0L256.8 269.0M258.8 367.1L256.4 260.6M254.0 357.8L256.5 252.4M249.7 347.3L257.0 244.3M246.0 335.8L257.9 236.6M243.0 323.3L259.3 229.4M240.7 310.1L261.1 222.7M239.0 296.4L263.2 216.6M238.1 282.3L265.7 211.3M238.0 268.0L268.5 206.7M238.6 253.8L271.6 203.0M240.0 239.7L275.0 200.2M242.1 226.0L278.5 198.4M244.9 212.9L282.2 197.5M248.4 200.6L285.9 197.6M252.5 189.2L289.7 198.7M257.1 178.9L293.5 200.7M262.3 169.8L297.3 203.7M267.9 162.0L300.9 207.5M273.8 155.7L304.4 212.3M280.0 150.9L307.6 217.7M286.4 147.7L310.7 223.9M292.9 146.2L313.4 230.8" stroke="#d8d8d8" stroke-width="0.7" stroke-opacity="0.45" fill="none"/><path d="M296.1 146.0L257.5 239.7M302.6 147.0L258.7 232.3M309.0 149.6L260.3 225.3M315.2 153.8L262.3 219.0M321.0 159.5L264.7 213.3M326.6 166.8L267.4 208.5M331.6 175.4L270.3 204.4M336.2 185.3L273.6 201.2M340.2 196.3L277.0 199.0M343.6 208.4L280.7 197.7M346.3 221.2L284.4 197.4M348.3 234.7L288.2 198.1M349.5 248.6L292.0 199.8M350.0 262.8L295.8 202.4M349.8 277.1L299.4 205.9M348.8 291.3L303.0 210.2M347.0 305.2L306.3 215.4M344.6 318.6L309.5 221.3M341.4 331.3L312.3 227.9M337.6 343.2L314.8 235.1M333.3 354.1L317.0 242.7M328.3 363.8L318.8 250.6M323.0 372.3L320.3 258.9M317.2 379.3L321.2 267.3M311.1 384.9L321.8 275.7M304.8 388.9L321.9 284.0M298.4 391.3L321.6 292.2M291.9 392.0L320.8 300.1M285.4 391.0L319.6 307.5M279.0 388.4L318.0 314.4M272.8 384.2L316.0 320.8M267.0 378.5L313.7 326.4M261.4 371.2L311.0 331.3M256.4 362.6L308.0 335.3M251.8 352.7L304.7 338.5M247.8 341.7L301.3 340.7M244.4 329.6L297.7 342.0M241.7 316.8L293.9 342.3M239.7 303.3L290.1 341.7M238.5 289.4L286.3 340.0M238.0 275.2L282.6 337.4M238.2 260.9L278.9 333.9M239.2 246.7L275.3 329.5M241.0 232.8L272.0 324.3M243.4 219.4L268.9 318.4M246.6 206.7L266.0 311.9M250.4 194.8L263.5 304.7M254.7 183.9L261.3 297.1M259.7 174.2L259.5 289.1M265.0 165.7L258.1 280.9M270.8 158.7L257.1 272.5M276.9 153.1L256.5 264.1M283.2 149.1L256.4 255.7M289.6 146.7L256.7 247.6" stroke="#e4e4e4" stroke-width="0.8" stroke-opacity="0.7" fill="none"/>
<ellipse cx="268.5" cy="190" rx="1.76" ry="5.25" transform="rotate(25 268.5 190)" fill="#2f3030"/>
<ellipse cx="275.1" cy="179.8" rx="2.20" ry="6.83" transform="rotate(22 275.1 179.8)" fill="#2f3030"/>
<ellipse cx="283.9" cy="175" rx="2.31" ry="7.35" transform="rotate(20 283.9 175)" fill="#2f3030"/>
<ellipse cx="292.6" cy="176.6" rx="2.31" ry="7.35" transform="rotate(20 292.6 176.6)" fill="#2f3030"/>
<ellipse cx="302.9" cy="182.1" rx="2.42" ry="7.35" transform="rotate(20 302.9 182.1)" fill="#2f3030"/>
<ellipse cx="314.1" cy="193.3" rx="2.53" ry="7.35" transform="rotate(22 314.1 193.3)" fill="#2f3030"/>
<ellipse cx="321" cy="207.2" rx="2.75" ry="7.35" transform="rotate(25 321 207.2)" fill="#2f3030"/>
<ellipse cx="326.6" cy="220.7" rx="3.30" ry="7.35" transform="rotate(22 326.6 220.7)" fill="#2f3030"/>
<ellipse cx="330.6" cy="237.4" rx="4.18" ry="6.83" transform="rotate(15 330.6 237.4)" fill="#2f3030"/>
<ellipse cx="334.5" cy="260" rx="6.38" ry="6.72" transform="rotate(5 334.5 260)" fill="#2f3030"/>
<ellipse cx="335.5" cy="287.5" rx="5.94" ry="6.72" transform="rotate(-5 335.5 287.5)" fill="#2f3030"/>
<ellipse cx="330.6" cy="308.6" rx="3.63" ry="6.83" transform="rotate(10 330.6 308.6)" fill="#2f3030"/>
<ellipse cx="327.4" cy="326" rx="2.75" ry="7.35" transform="rotate(15 327.4 326)" fill="#2f3030"/>
<ellipse cx="321.8" cy="338.8" rx="2.42" ry="6.83" transform="rotate(20 321.8 338.8)" fill="#2f3030"/>
<ellipse cx="316.2" cy="350" rx="2.20" ry="6.30" transform="rotate(20 316.2 350)" fill="#2f3030"/>
<ellipse cx="308.5" cy="356.5" rx="2.20" ry="6.30" transform="rotate(20 308.5 356.5)" fill="#2f3030"/>
<ellipse cx="299.5" cy="360.3" rx="2.20" ry="6.30" transform="rotate(20 299.5 360.3)" fill="#2f3030"/>
<ellipse cx="291.3" cy="362.5" rx="2.20" ry="6.30" transform="rotate(20 291.3 362.5)" fill="#2f3030"/>
<ellipse cx="282.4" cy="359.5" rx="2.31" ry="6.30" transform="rotate(25 282.4 359.5)" fill="#2f3030"/>
<ellipse cx="274.3" cy="352.4" rx="2.64" ry="5.78" transform="rotate(35 274.3 352.4)" fill="#2f3030"/>
<ellipse cx="266.4" cy="342" rx="3.08" ry="5.25" transform="rotate(45 266.4 342)" fill="#2f3030"/>
<ellipse cx="259.2" cy="327.7" rx="3.52" ry="4.73" transform="rotate(40 259.2 327.7)" fill="#2f3030"/>
<ellipse cx="254.4" cy="310.2" rx="3.63" ry="4.73" transform="rotate(35 254.4 310.2)" fill="#2f3030"/>
<ellipse cx="251.2" cy="291.1" rx="3.52" ry="4.73" transform="rotate(30 251.2 291.1)" fill="#2f3030"/>
<ellipse cx="249.7" cy="270.8" rx="3.08" ry="4.73" transform="rotate(25 249.7 270.8)" fill="#2f3030"/>
<ellipse cx="250.4" cy="251" rx="2.64" ry="4.73" transform="rotate(25 250.4 251)" fill="#2f3030"/>
<ellipse cx="252" cy="233.4" rx="2.20" ry="4.73" transform="rotate(25 252 233.4)" fill="#2f3030"/>
</g>
<path d="M276.50 204.00 C279.00 203.45 280.83 203.03 283.00 203.20 C285.17 203.37 287.42 203.98 289.50 205.00 C291.58 206.02 293.42 207.42 295.50 209.30 C297.58 211.18 300.03 213.72 302.00 216.30 C303.97 218.88 305.75 221.85 307.30 224.80 C308.85 227.75 310.15 230.88 311.30 234.00 C312.45 237.12 313.33 239.50 314.20 243.50 C315.07 247.50 315.90 252.75 316.50 258.00 C317.10 263.25 317.68 268.67 317.80 275.00 C317.92 281.33 317.72 289.87 317.20 296.00 C316.68 302.13 315.92 307.05 314.70 311.80 C313.48 316.55 311.87 321.08 309.90 324.50 C307.93 327.92 305.22 330.47 302.90 332.30 C300.58 334.13 298.23 335.17 296.00 335.50 C293.77 335.83 291.53 335.33 289.50 334.30 C287.47 333.27 286.07 331.72 283.80 329.30 C281.53 326.88 278.28 323.52 275.90 319.80 C273.52 316.08 271.35 311.52 269.50 307.00 C267.65 302.48 266.05 297.20 264.80 292.70 C263.55 288.20 262.72 284.78 262.00 280.00 C261.28 275.22 260.93 269.33 260.50 264.00 C260.07 258.67 259.62 253.33 259.40 248.00 C259.18 242.67 259.17 236.50 259.20 232.00 C259.23 227.50 259.22 224.25 259.60 221.00 C259.98 217.75 260.10 214.92 261.50 212.50 C262.90 210.08 265.50 207.92 268.00 206.50 C270.50 205.08 274.00 204.55 276.50 204.00 Z" fill="#303131" stroke="#f6f6f6" stroke-width="1.7"/>
<path d="M259.40 232.00 C259.43 230.17 259.53 224.25 259.60 221.00 C259.67 217.75 259.73 215.13 259.80 212.50 C259.87 209.87 259.17 209.33 260.00 205.20 C260.83 201.07 262.95 193.27 264.80 187.70 C266.65 182.13 268.72 176.57 271.10 171.80 C273.48 167.03 276.18 162.68 279.10 159.10 C282.02 155.52 285.42 152.28 288.60 150.30 C291.78 148.32 295.02 147.47 298.20 147.20 C301.38 146.93 304.52 147.38 307.70 148.70 C310.88 150.02 314.38 152.32 317.30 155.10 C320.22 157.88 322.82 161.55 325.20 165.40 C327.58 169.25 329.75 174.18 331.60 178.20 C333.45 182.22 334.75 185.78 336.30 189.50 C337.85 193.22 339.60 196.10 340.90 200.50 C342.20 204.90 343.17 210.68 344.10 215.90 C345.03 221.12 345.83 226.50 346.50 231.80 C347.17 237.10 347.72 242.40 348.10 247.70 C348.48 253.00 348.68 258.22 348.80 263.60 C348.92 268.98 348.92 274.62 348.80 280.00 C348.68 285.38 348.48 290.60 348.10 295.90 C347.72 301.20 347.17 306.50 346.50 311.80 C345.83 317.10 345.18 322.67 344.10 327.70 C343.02 332.73 341.18 338.37 340.00 342.00 C338.82 345.63 337.95 346.67 337.00 349.50 C336.05 352.33 334.80 355.82 334.30 359.00 C333.80 362.18 333.75 365.40 334.00 368.60 C334.25 371.80 334.72 375.42 335.80 378.20 C336.88 380.98 338.52 383.22 340.50 385.30 C342.48 387.38 344.92 389.32 347.70 390.70 C350.48 392.08 355.62 393.12 357.20 393.60 " fill="none" stroke="#f4f4f4" stroke-width="2"/>
<path d="M238.60 306.00 C238.98 308.30 239.92 315.30 240.90 319.80 C241.88 324.30 243.23 327.97 244.50 333.00 C245.77 338.03 247.53 345.17 248.50 350.00 C249.47 354.83 250.00 360.00 250.30 362.00 " fill="none" stroke="#e8e8e8" stroke-width="1"/>
<path d="M573.5 144 L576 134.2 H597 L600 144 Z" fill="#e1e2e5"/>
<path d="M599.5 144 L602 134.2 H622 L625 144 Z" fill="#e1e2e5"/>
<path d="M624.5 144 L627 134.2 H641 L647 144 Z" fill="#e1e2e5"/>
<rect x="559" y="134.2" width="15" height="10" fill="#f2f3f5"/>
<path d="M561 141.8 A4 3.8 0 0 1 569 141.8 Z" fill="url(#ts)"/><ellipse cx="565" cy="141.6" rx="4" ry="1" fill="#1a6070"/>
<path d="M561 141.4 A4 4 0 0 1 569 141.4 Q565 143 561 141.4Z" fill="url(#ts)"/>
<circle cx="581.7" cy="139.3" r="3.3" fill="#f2dc5a" stroke="#c0a030" stroke-width="0.5"/><path d="M579 141.5 l-1 2 l2.5 -1Z" fill="#e0c040"/>
<rect x="593" y="136.8" width="8" height="6.4" fill="#6a8a8a" stroke="#4a5a5a" stroke-width="0.5"/><rect x="597.5" y="135" width="3.5" height="2" fill="#222"/>
<circle cx="612.6" cy="139.6" r="3" fill="#e05020"/><path d="M609 139.6 H616.2 M612.6 136 V143" stroke="#602010" stroke-width="0.6"/>
<circle cx="629.6" cy="139.2" r="3.2" fill="none" stroke="#c8c8c8" stroke-width="1.6" stroke-dasharray="1 0.7"/><circle cx="629.6" cy="139.2" r="1.6" fill="none" stroke="#cfcfcf" stroke-width="0.8"/>
<path d="M563.5 189.8 H570 M563.5 189.8 l2.6 -2.6 M563.5 189.8 l2.6 2.6" stroke="#a8a8a8" stroke-width="1.2" fill="none"/>
<path d="M585 189.8 H578.5 M585 189.8 l-2.6 -2.6 M585 189.8 l-2.6 2.6" stroke="#a8a8a8" stroke-width="1.2" fill="none"/>
<rect x="592.2" y="183.3" width="11" height="13.2" fill="#fff" stroke="#cfd0d3" stroke-width="0.5"/>
<circle cx="597" cy="189" r="2.4" fill="none" stroke="#333" stroke-width="0.8"/><path d="M598.7 190.8 L600.6 192.7" stroke="#333" stroke-width="1"/>
<path d="M608.2 187 H615.8 M608.2 189.8 H615.8 M608.2 192.6 H615.8" stroke="#333" stroke-width="1"/>
<circle cx="626.3" cy="189.8" r="4.9" fill="url(#hs)"/><text x="624.2" y="192.7" font-size="7.5" font-weight="bold" fill="#fff" font-family="Liberation Sans">?</text>
<rect x="560.6" y="199.6" width="10.6" height="10.4" fill="#fff" stroke="#444" stroke-width="0.6"/><path d="M565.9 201.5 V208.1 M562.6 204.8 H569.2" stroke="#222" stroke-width="1"/>
<path d="M593.5 251.8 l1.5 1.5 l1.5 -1.5 M597.5 251.8 l1.5 1.5 l1.5 -1.5" stroke="#555" stroke-width="0.7" fill="none"/>
<path d="M636.8 144 V134.2 H655 L658 144 Z" fill="#e1e2e5"/>
<path d="M677 144 L679 134.2 H698 L701 144 Z" fill="#e1e2e5"/>
<path d="M700.5 144 L702 134.2 H721 L723.5 144 Z" fill="#e1e2e5"/>
<path d="M723 144 L725 134.2 H744 L746 144 Z" fill="#e1e2e5"/>
<path d="M745.5 144 L747.5 134.2 H761 L766.5 144 Z" fill="#e1e2e5"/>
<circle cx="642.3" cy="139.5" r="3.6" fill="url(#rb)"/><circle cx="642.3" cy="139.5" r="1.3" fill="#fff"/>
<path d="M659.5 136.5 L667 137 L667.5 140.5 L663.5 143 L659.5 141Z" fill="#d03020"/><path d="M660 137 L666.5 137.4 L663.5 139.5Z" fill="#fff"/><path d="M659.5 141 L663.5 143 L667.5 140.5 L667.5 141.8 L663.5 144 L659.5 142.2Z" fill="#2a3a80"/>
<circle cx="684.3" cy="140" r="3.4" fill="url(#bs)"/><path d="M686 137.5 l2 -2" stroke="#888" stroke-width="0.8"/>
<path d="M703.5 142.5 L709 136.5" stroke="#a04040" stroke-width="1.6" stroke-linecap="round"/><circle cx="709" cy="136.5" r="1.1" fill="#ddd" stroke="#777" stroke-width="0.4"/>
<path d="M726 137 h3 l1 1 h3.5 v4.5 h-7.5Z" fill="#e8b840" stroke="#9a7020" stroke-width="0.5"/>
<rect x="748.3" y="136.2" width="7.4" height="6.6" fill="#6a70c8" stroke="#3a4090" stroke-width="0.6"/><path d="M749.5 140.5 l2.5 -2 l2.5 2" stroke="#ccd" stroke-width="0.6" fill="none"/>
<circle cx="773.4" cy="139.4" r="3.2" fill="none" stroke="#c8c8c8" stroke-width="1.6" stroke-dasharray="1 0.7"/><circle cx="773.4" cy="139.4" r="1.6" fill="none" stroke="#cfcfcf" stroke-width="0.8"/>
<path d="M640 146.5 H643.5 L645 148 V154 H640 Z" fill="#fff" stroke="#555" stroke-width="0.6"/>
<path d="M651 146.5 H654 L655.5 148 V152 H651 Z" fill="#ddd" stroke="#555" stroke-width="0.6"/><path d="M653 148.5 H656 L657.5 150 V154 H653 Z" fill="#fff" stroke="#555" stroke-width="0.6"/>
<path d="M662.3 147 L668.3 153.5 M668.3 147 L662.3 153.5" stroke="#d02020" stroke-width="1.2"/>
<path d="M672.5 152.5 L676 148 L679.5 152.5Z" fill="#b5b5b5"/>
<path d="M684.5 148.3 L691.5 148.3 L688 152.8Z" fill="#6a60c8"/>
<path d="M701.5 147 L697.5 150.3 L701.5 153.6Z" fill="#b0b0b0"/>
<path d="M707.5 147 H714.5 L712 150.5 V154 L710 153 V150.5 Z" fill="#4a58b8"/><path d="M713 153 l1.5 -1.5 v1.5z" fill="#222"/>
<path d="M719.5 146.5 H723.5 L725.5 148.5 V154 H719.5Z" fill="#c8c8c8"/>
<path d="M730 154 L734.5 148.5 M731.5 147.5 L735 146.5 L737 149.5 L735.5 150" stroke="#222" stroke-width="1.3" fill="none"/><path d="M736 153 l1.5 -1.5 v1.5z" fill="#222"/>
<circle cx="744.5" cy="150.3" r="3.4" fill="url(#hs)"/>
<rect x="669" y="157" width="0.5" height="9" fill="#e8e8e8"/>
<rect x="677.6" y="157" width="0.5" height="9" fill="#e8e8e8"/>
<rect x="686" y="157" width="0.5" height="9" fill="#e8e8e8"/>
<rect x="694.7" y="157" width="0.5" height="9" fill="#e8e8e8"/>
<rect x="703.2" y="157" width="0.5" height="9" fill="#e8e8e8"/>
<rect x="736.5" y="157" width="0.5" height="9" fill="#e8e8e8"/>
<circle cx="681.4" cy="171" r="2.3" fill="#f0d040" stroke="#a08020" stroke-width="0.5"/><rect x="680.3" y="173" width="2.2" height="1.8" fill="#c09020"/>
<rect x="687.5" y="170" width="5" height="4.5" fill="#e8c040" stroke="#a08020" stroke-width="0.4"/><path d="M688.5 170 v-1.3 a1.5 1.5 0 0 1 3 0" stroke="#bbb" stroke-width="0.6" fill="none"/>
<rect x="696.4" y="169.2" width="5.2" height="5.2" fill="#000" stroke="#fff" stroke-width="0.7"/>
<circle cx="708" cy="171.8" r="3.2" fill="#fff"/>
<path d="M772.3 169 L775 171.8 L772.3 174.6 L769.6 171.8Z" fill="#000" stroke="#fff" stroke-width="0.5"/>
<path d="M670.8 181.5 L672.8 183.6 L676.3 179.3" stroke="#222" stroke-width="0.8" fill="none"/>
<rect x="696.4" y="179.4" width="5.2" height="5.2" fill="#000"/>
<path d="M772.3 179 L775 181.8 L772.3 184.6 L769.6 181.8Z" fill="#000"/>
<path d="M640.5 439 L638.8 441 L640.5 443" stroke="#555" stroke-width="0.7" fill="none"/>
<path d="M770 439 L771.7 441 L770 443" stroke="#555" stroke-width="0.7" fill="none"/>
<rect x="4.80" y="103.2" width="34.60" height="10" fill="#f6f7f8"/>
<rect x="40.40" y="103.2" width="32.00" height="10" fill="#e3e4e7"/>
<rect x="73.40" y="103.2" width="34.30" height="10" fill="#e3e4e7"/>
<rect x="108.70" y="103.2" width="30.90" height="10" fill="#e3e4e7"/>
<rect x="140.60" y="103.2" width="27.15" height="10" fill="#e3e4e7"/>
<rect x="168.75" y="103.2" width="55.20" height="10" fill="#e3e4e7"/>
<rect x="224.95" y="103.2" width="33.55" height="10" fill="#e3e4e7"/>
<rect x="259.50" y="103.2" width="37.95" height="10" fill="#e3e4e7"/>
<rect x="298.45" y="103.2" width="42.05" height="10" fill="#e3e4e7"/>
<rect x="341.50" y="103.2" width="47.15" height="10" fill="#e3e4e7"/>
<rect x="389.65" y="103.2" width="40.45" height="10" fill="#e3e4e7"/>
<rect x="431.10" y="103.2" width="41.50" height="10" fill="#e3e4e7"/>
<rect x="473.60" y="103.2" width="46.10" height="10" fill="#e3e4e7"/>
<rect x="520.70" y="103.2" width="33.10" height="10" fill="#e3e4e7"/>
<rect x="554.80" y="103.2" width="38.70" height="10" fill="#e3e4e7"/>
<rect x="41" y="129.9" width="46.4" height="9.9" fill="#b8c8d8"/>
<rect x="81.2" y="129.9" width="6.2" height="9.9" fill="#a9bccf"/>
<path d="M82.8 134.2 L85.6 134.2 L84.2 136 Z" fill="#1b2535"/>
<rect x="44.7" y="435.8" width="35" height="10.1" rx="1.5" fill="#f6f7f8"/>
<rect x="79.8" y="436.4" width="19.6" height="9.4" rx="1.5" fill="#e0e1e4"/>
<rect x="101.6" y="436.4" width="19.7" height="9.4" rx="1.5" fill="#e0e1e4"/>
<rect x="124.6" y="436.4" width="19.6" height="9.4" rx="1.5" fill="#e0e1e4"/>
<rect x="148.6" y="436.4" width="9.8" height="9.4" rx="1.5" fill="#e6e7ea"/>
<path d="M153.5 438.7 V443.5 M151.1 441.1 H155.9" stroke="#888" stroke-width="0.7"/>
<rect x="5.15" y="451.9" width="5.6" height="5.6" fill="#fff" stroke="#6f6f6f" stroke-width="0.6"/>
<path d="M6.20 454.6 L7.60 456.2 L10.00 452.9" fill="none" stroke="#333" stroke-width="0.6"/>
<rect x="26.55" y="451.9" width="5.6" height="5.6" fill="#fff" stroke="#6f6f6f" stroke-width="0.6"/>
<rect x="51.05" y="451.9" width="5.6" height="5.6" fill="#fff" stroke="#6f6f6f" stroke-width="0.6"/>
<path d="M52.10 454.6 L53.50 456.2 L55.90 452.9" fill="none" stroke="#333" stroke-width="0.6"/>
<rect x="76.15" y="451.9" width="5.6" height="5.6" fill="#fff" stroke="#6f6f6f" stroke-width="0.6"/>
<path d="M77.20 454.6 L78.60 456.2 L81.00 452.9" fill="none" stroke="#333" stroke-width="0.6"/>
<rect x="98.05" y="451.9" width="5.6" height="5.6" fill="#fff" stroke="#6f6f6f" stroke-width="0.6"/>
<rect x="119.35" y="451.9" width="5.6" height="5.6" fill="#fff" stroke="#6f6f6f" stroke-width="0.6"/>
<path d="M120.40 454.6 L121.80 456.2 L124.20 452.9" fill="none" stroke="#333" stroke-width="0.6"/>
<rect x="138.05" y="451.9" width="5.6" height="5.6" fill="#fff" stroke="#6f6f6f" stroke-width="0.6"/>
<rect x="161.35" y="451.9" width="5.6" height="5.6" fill="#fff" stroke="#6f6f6f" stroke-width="0.6"/>
<path d="M162.40 454.6 L163.80 456.2 L166.20 452.9" fill="none" stroke="#333" stroke-width="0.6"/>
<rect x="182.55" y="451.9" width="5.6" height="5.6" fill="#fff" stroke="#6f6f6f" stroke-width="0.6"/>
<path d="M183.60 454.6 L185.00 456.2 L187.40 452.9" fill="none" stroke="#333" stroke-width="0.6"/>
<rect x="208.25" y="451.9" width="5.6" height="5.6" fill="#fff" stroke="#6f6f6f" stroke-width="0.6"/>
<path d="M209.30 454.6 L210.70 456.2 L213.10 452.9" fill="none" stroke="#333" stroke-width="0.6"/>
<rect x="232.15" y="451.9" width="5.6" height="5.6" fill="#fff" stroke="#6f6f6f" stroke-width="0.6"/>
<path d="M233.20 454.6 L234.60 456.2 L237.00 452.9" fill="none" stroke="#333" stroke-width="0.6"/>
<rect x="260.75" y="451.9" width="5.6" height="5.6" fill="#f4f4f4" stroke="#d0d0d0" stroke-width="0.6"/>
<rect x="294.95" y="451.9" width="5.6" height="5.6" fill="#f4f4f4" stroke="#d0d0d0" stroke-width="0.6"/>
<rect x="0" y="460.3" width="778" height="0.6" fill="#dfe0e3"/>
<rect x="24.7" y="461" width="0.6" height="7.5" fill="#d6d7da"/>
<rect x="67.5" y="461" width="0.6" height="7.5" fill="#d6d7da"/>
<rect x="111.2" y="461" width="0.6" height="7.5" fill="#d6d7da"/>
<rect x="155" y="461" width="0.6" height="7.5" fill="#d6d7da"/>
<rect x="283" y="461" width="0.6" height="7.5" fill="#d6d7da"/>
<rect x="316.5" y="461" width="0.6" height="7.5" fill="#d6d7da"/>
<rect x="338.5" y="461" width="0.6" height="7.5" fill="#d6d7da"/>
<rect x="361.5" y="461" width="0.6" height="7.5" fill="#d6d7da"/>
<rect x="384" y="461" width="0.6" height="7.5" fill="#d6d7da"/>
<rect x="421" y="461" width="0.6" height="7.5" fill="#d6d7da"/>
<rect x="449.7" y="461" width="0.6" height="7.5" fill="#d6d7da"/>
<rect x="496" y="461" width="0.6" height="7.5" fill="#d6d7da"/>
<rect x="201.3" y="462.3" width="4.9" height="4.9" fill="#111"/>
<defs>
<linearGradient id="wbg" x1="0" y1="0" x2="1" y2="0"><stop offset="0" stop-color="#dadbdb"/><stop offset="0.55" stop-color="#e2e3e3"/><stop offset="1" stop-color="#eaebeb"/></linearGradient>
<radialGradient id="skin" cx="0.5" cy="0.4" r="0.65"><stop offset="0" stop-color="#bb9682"/><stop offset="0.65" stop-color="#a98472"/><stop offset="1" stop-color="#8a6654"/></radialGradient>
<clipPath id="wclip"><rect x="651.7" y="42.2" width="126.3" height="70.5"/></clipPath>
</defs>
<g clip-path="url(#wclip)">
<rect x="651.7" y="42.2" width="126.3" height="70.5" fill="url(#wbg)"/>
<path d="M725 105 C735 107 748 109.5 762 113 L725 113 Z" fill="#b4b4b4"/>
<path d="M727 105.5 L731 112.7" stroke="#4a4a4a" stroke-width="1"/>
<path d="M686 113 C689 109 692 106 696 104 L698 113 Z" fill="#c4c4c4"/>
<ellipse cx="689.6" cy="80" rx="2.2" ry="4.2" fill="#94705f"/><ellipse cx="732.2" cy="80.5" rx="2.2" ry="4.2" fill="#94705f"/>
<circle cx="733" cy="83" r="1.1" fill="#3a3a3a"/>
<path d="M690.5 68 C690 78 691 90 693.5 99 C695 106 697 112 698 114 L726 114 C727 110 728 104 728.5 98 C731 90 731.5 78 730.8 68 C726 57 696 57 690.5 68 Z" fill="url(#skin)"/>
<path d="M687.3 74 C686.5 66 687.5 58 691.4 53 C695 49 699 47.5 703 46.8 C709 45.3 716 45.2 722 47.2 C727 49 730 53 731.2 58 C732 63 731.8 68 730.7 72 C729.5 72.5 728.8 72.8 728.2 73.1 C727 70 725.5 68 723.2 67 C720 64.5 717 63 714.8 63 C710 63.2 706 64 703 64.8 C699 66 696.5 67.5 694.8 69.7 C692.8 71.5 691.5 73.5 690.6 75.6 Z" fill="#272324"/>
<path d="M695.2 77 Q700.5 75 706.5 75.8" stroke="#2a2222" stroke-width="1.6" fill="none"/><path d="M716.3 75.8 Q722 75 727 77.5" stroke="#2a2222" stroke-width="1.6" fill="none"/>
<ellipse cx="701.5" cy="80.6" rx="2.9" ry="1.2" fill="#2e2626"/><ellipse cx="721.5" cy="80" rx="2.9" ry="1.2" fill="#2e2626"/>
<path d="M708.5 84 Q708 89 707 91.5 Q711.5 93.5 716 91.5 Q714.5 89 714.5 84" fill="#8c6a5a" opacity="0.55"/>
<path d="M702.8 98 Q707 94.8 712.5 95.6 Q718 94.8 723 97.8 Q718 98 712.5 97.5 Q707 98 702.8 98Z" fill="#2a2020" stroke="#2a2020" stroke-width="1.6"/>
<path d="M705 101 Q712.5 98.8 720 101 Q712.5 105 705 101Z" fill="#9a6462"/>
<path d="M696 104 Q700 107 704 106.5 Q711.5 109 719 106.5 Q724 107 727.5 104 L727 114 L697.5 114 Z" fill="#4a3630" opacity="0.6"/>
</g>
<rect x="651.7" y="99.8" width="41.3" height="12.9" fill="#8b8b8b" fill-opacity="0.9"/>

</svg>
<div class="t" style="left:10.75px;top:55.14px;font-size:6.8px;font-weight:normal;color:#2a2a2a;transform:scaleX(0.888);">Untitled - Rhinoceros 6 Undefined - [Perspective]</div>
<div class="t" style="left:2.55px;top:65.93px;font-size:6.7px;font-weight:normal;color:#222;transform:scaleX(0.900);">File</div>
<div class="t" style="left:17.75px;top:65.93px;font-size:6.7px;font-weight:normal;color:#222;transform:scaleX(0.928);">Edit</div>
<div class="t" style="left:33.95px;top:65.93px;font-size:6.7px;font-weight:normal;color:#222;transform:scaleX(0.904);">View</div>
<div class="t" style="left:52.55px;top:65.93px;font-size:6.7px;font-weight:normal;color:#222;transform:scaleX(0.857);">Curve</div>
<div class="t" style="left:73.35px;top:65.93px;font-size:6.7px;font-weight:normal;color:#222;transform:scaleX(0.863);">Surface</div>
<div class="t" style="left:98.75px;top:65.93px;font-size:6.7px;font-weight:normal;color:#222;transform:scaleX(0.921);">Solid</div>
<div class="t" style="left:118.25px;top:65.93px;font-size:6.7px;font-weight:normal;color:#222;transform:scaleX(0.874);">Mesh</div>
<div class="t" style="left:138.15px;top:65.93px;font-size:6.7px;font-weight:normal;color:#222;transform:scaleX(0.908);">Dimension</div>
<div class="t" style="left:172.55px;top:65.93px;font-size:6.7px;font-weight:normal;color:#222;transform:scaleX(0.903);">Transform</div>
<div class="t" style="left:204.95px;top:65.93px;font-size:6.7px;font-weight:normal;color:#222;transform:scaleX(0.915);">Tools</div>
<div class="t" style="left:224.75px;top:65.93px;font-size:6.7px;font-weight:normal;color:#222;transform:scaleX(0.899);">Analyze</div>
<div class="t" style="left:251.75px;top:65.93px;font-size:6.7px;font-weight:normal;color:#222;transform:scaleX(0.871);">Render</div>
<div class="t" style="left:276.15px;top:65.93px;font-size:6.7px;font-weight:normal;color:#222;transform:scaleX(0.817);">Panels</div>
<div class="t" style="left:298.15px;top:65.93px;font-size:6.7px;font-weight:normal;color:#222;transform:scaleX(0.877);">ggRhinoIFC</div>
<div class="t" style="left:334.45px;top:65.93px;font-size:6.7px;font-weight:normal;color:#222;transform:scaleX(1.017);">Help</div>
<div class="t" style="left:3.45px;top:75.83px;font-size:6.7px;font-weight:normal;color:#2a2a2a;transform:scaleX(0.854);">Creating meshes... Press Esc to cancel</div>
<div class="t" style="left:3.45px;top:83.43px;font-size:6.7px;font-weight:normal;color:#2a2a2a;transform:scaleX(0.899);">Display mode set to &quot;Rendered&quot;.</div>
<div class="t" style="left:3.65px;top:92.43px;font-size:6.7px;font-weight:bold;color:#111;transform:scaleX(0.896);">Command:</div>
<div class="t" style="left:9.05px;top:106.03px;font-size:6.7px;font-weight:normal;color:#333;transform:scaleX(0.928);">Standard</div>
<div class="t" style="left:45.55px;top:106.03px;font-size:6.7px;font-weight:normal;color:#333;transform:scaleX(0.874);">CPlanes</div>
<div class="t" style="left:78.15px;top:106.03px;font-size:6.7px;font-weight:normal;color:#333;transform:scaleX(0.917);">Set View</div>
<div class="t" style="left:114.15px;top:106.03px;font-size:6.7px;font-weight:normal;color:#333;transform:scaleX(0.925);">Display</div>
<div class="t" style="left:145.75px;top:106.03px;font-size:6.7px;font-weight:normal;color:#333;transform:scaleX(0.914);">Select</div>
<div class="t" style="left:173.75px;top:106.03px;font-size:6.7px;font-weight:normal;color:#333;transform:scaleX(0.936);">Viewport Layout</div>
<div class="t" style="left:230.35px;top:106.03px;font-size:6.7px;font-weight:normal;color:#333;transform:scaleX(0.952);">Visibility</div>
<div class="t" style="left:264.75px;top:106.03px;font-size:6.7px;font-weight:normal;color:#333;transform:scaleX(0.910);">Transform</div>
<div class="t" style="left:303.65px;top:106.03px;font-size:6.7px;font-weight:normal;color:#333;transform:scaleX(0.904);">Curve Tools</div>
<div class="t" style="left:346.55px;top:106.03px;font-size:6.7px;font-weight:normal;color:#333;transform:scaleX(0.916);">Surface Tools</div>
<div class="t" style="left:394.75px;top:106.03px;font-size:6.7px;font-weight:normal;color:#333;transform:scaleX(0.950);">Solid Tools</div>
<div class="t" style="left:435.85px;top:106.03px;font-size:6.7px;font-weight:normal;color:#333;transform:scaleX(0.949);">Mesh Tools</div>
<div class="t" style="left:478.35px;top:106.03px;font-size:6.7px;font-weight:normal;color:#333;transform:scaleX(0.924);">Render Tools</div>
<div class="t" style="left:525.75px;top:106.03px;font-size:6.7px;font-weight:normal;color:#333;transform:scaleX(0.965);">Drafting</div>
<div class="t" style="left:560.25px;top:106.03px;font-size:6.7px;font-weight:normal;color:#333;transform:scaleX(0.915);">New in V6</div>
<div class="t" style="left:45.25px;top:132.55px;font-size:6.91px;font-weight:bold;color:#0c1420;transform:scaleX(0.864);">Perspective</div>
<div class="t" style="left:46.75px;top:438.41px;font-size:6.48px;font-weight:normal;color:#333;transform:scaleX(0.902);">Perspective</div>
<div class="t" style="left:84.75px;top:438.41px;font-size:6.48px;font-weight:normal;color:#333;transform:scaleX(1.006);">Top</div>
<div class="t" style="left:103.25px;top:438.41px;font-size:6.48px;font-weight:normal;color:#333;transform:scaleX(1.059);">Front</div>
<div class="t" style="left:126.25px;top:438.41px;font-size:6.48px;font-weight:normal;color:#333;transform:scaleX(1.092);">Right</div>
<div class="t" style="left:12.45px;top:451.93px;font-size:6.7px;font-weight:normal;color:#333;transform:scaleX(0.907);">End</div>
<div class="t" style="left:34.25px;top:451.93px;font-size:6.7px;font-weight:normal;color:#333;transform:scaleX(0.938);">Near</div>
<div class="t" style="left:58.35px;top:451.93px;font-size:6.7px;font-weight:normal;color:#333;transform:scaleX(0.911);">Point</div>
<div class="t" style="left:83.45px;top:451.93px;font-size:6.7px;font-weight:normal;color:#333;transform:scaleX(1.002);">Mid</div>
<div class="t" style="left:105.75px;top:451.93px;font-size:6.7px;font-weight:normal;color:#333;transform:scaleX(0.839);">Cen</div>
<div class="t" style="left:126.75px;top:451.93px;font-size:6.7px;font-weight:normal;color:#333;transform:scaleX(1.008);">Int</div>
<div class="t" style="left:145.75px;top:451.93px;font-size:6.7px;font-weight:normal;color:#333;transform:scaleX(0.813);">Perp</div>
<div class="t" style="left:168.75px;top:451.93px;font-size:6.7px;font-weight:normal;color:#333;transform:scaleX(0.881);">Tan</div>
<div class="t" style="left:190.05px;top:451.93px;font-size:6.7px;font-weight:normal;color:#333;transform:scaleX(0.849);">Quad</div>
<div class="t" style="left:215.75px;top:451.93px;font-size:6.7px;font-weight:normal;color:#333;transform:scaleX(0.952);">Knot</div>
<div class="t" style="left:239.65px;top:451.93px;font-size:6.7px;font-weight:normal;color:#333;transform:scaleX(0.886);">Vertex</div>
<div class="t" style="left:268.15px;top:451.93px;font-size:6.7px;font-weight:normal;color:#777;transform:scaleX(0.907);">Project</div>
<div class="t" style="left:302.35px;top:451.93px;font-size:6.7px;font-weight:normal;color:#777;transform:scaleX(0.932);">Disable</div>
<div class="t" style="left:2.35px;top:462.21px;font-size:6.48px;font-weight:normal;color:#333;transform:scaleX(0.881);">CPlane</div>
<div class="t" style="left:36.75px;top:462.21px;font-size:6.48px;font-weight:normal;color:#333;transform:scaleX(0.904);">x 1.579</div>
<div class="t" style="left:80.15px;top:462.21px;font-size:6.48px;font-weight:normal;color:#333;transform:scaleX(0.918);">y 0.467</div>
<div class="t" style="left:124.35px;top:462.21px;font-size:6.48px;font-weight:normal;color:#333;transform:scaleX(0.890);">z 0.000</div>
<div class="t" style="left:162.45px;top:462.21px;font-size:6.48px;font-weight:normal;color:#333;transform:scaleX(0.986);">Millimeters</div>
<div class="t" style="left:207.75px;top:462.21px;font-size:6.48px;font-weight:normal;color:#333;transform:scaleX(0.884);">Weave</div>
<div class="t" style="left:286.95px;top:462.21px;font-size:6.48px;font-weight:normal;color:#333;transform:scaleX(0.906);">Grid Snap</div>
<div class="t" style="left:453.75px;top:462.21px;font-size:6.48px;font-weight:normal;color:#333;transform:scaleX(0.923);">Record History</div>
<div class="t" style="left:499.75px;top:462.21px;font-size:6.48px;font-weight:normal;color:#333;transform:scaleX(0.981);">Filter</div>
<div class="t" style="left:516.75px;top:462.21px;font-size:6.48px;font-weight:normal;color:#333;transform:scaleX(0.921);">Minutes from last save: 73</div>
<div class="t" style="left:318.75px;top:462.21px;font-size:6.48px;font-weight:bold;color:#111;transform:scaleX(0.971);">Ortho</div>
<div class="t" style="left:340.55px;top:462.21px;font-size:6.48px;font-weight:bold;color:#111;transform:scaleX(0.915);">Planar</div>
<div class="t" style="left:363.95px;top:462.21px;font-size:6.48px;font-weight:bold;color:#111;transform:scaleX(0.899);">Osnap</div>
<div class="t" style="left:386.45px;top:462.21px;font-size:6.48px;font-weight:bold;color:#111;transform:scaleX(0.930);">SmartTrack</div>
<div class="t" style="left:423.35px;top:462.21px;font-size:6.48px;font-weight:bold;color:#111;transform:scaleX(0.958);">Gumball</div>
<div class="t" style="left:561.25px;top:146.73px;font-size:6.7px;font-weight:normal;color:#333;transform:scaleX(0.986);">The current background</div>
<div class="t" style="left:561.25px;top:155.13px;font-size:6.7px;font-weight:normal;color:#333;transform:scaleX(0.917);">mode is set to Solid</div>
<div class="t" style="left:561.25px;top:163.53px;font-size:6.7px;font-weight:normal;color:#333;transform:scaleX(0.915);">Color.</div>
<div class="t" style="left:563.25px;top:172.53px;font-size:6.7px;font-weight:normal;color:#4d86a8;transform:scaleX(0.892);">Switch the background ...</div>
<div class="t" style="left:567.75px;top:210.78px;font-size:6.05px;font-weight:normal;color:#8a8a8a;transform:scaleX(0.983);">There are currently no</div>
<div class="t" style="left:569.75px;top:218.78px;font-size:6.05px;font-weight:normal;color:#8a8a8a;transform:scaleX(1.004);">environments in this</div>
<div class="t" style="left:569.75px;top:226.68px;font-size:6.05px;font-weight:normal;color:#8a8a8a;transform:scaleX(1.056);">model. Click the [+]</div>
<div class="t" style="left:568.75px;top:234.68px;font-size:6.05px;font-weight:normal;color:#8a8a8a;transform:scaleX(1.048);">button to add some.</div>
<div class="t" style="left:579.15px;top:327.90px;font-size:6.26px;font-weight:normal;color:#6a6a6a;transform:scaleX(1.006);">No selection</div>
<div class="t" style="left:647.75px;top:136.61px;font-size:6.48px;font-weight:normal;color:#333;transform:scaleX(1.070);">P...</div>
<div class="t" style="left:667.75px;top:136.61px;font-size:6.48px;font-weight:normal;color:#333;transform:scaleX(1.389);">L...</div>
<div class="t" style="left:689.75px;top:136.61px;font-size:6.48px;font-weight:normal;color:#333;transform:scaleX(1.240);">R...</div>
<div class="t" style="left:711.75px;top:136.61px;font-size:6.48px;font-weight:normal;color:#333;transform:scaleX(1.159);">M...</div>
<div class="t" style="left:733.75px;top:136.61px;font-size:6.48px;font-weight:normal;color:#333;transform:scaleX(1.198);">Li...</div>
<div class="t" style="left:755.75px;top:136.61px;font-size:6.48px;font-weight:normal;color:#333;transform:scaleX(1.240);">H...</div>
<div class="t" style="left:639.75px;top:158.91px;font-size:6.48px;font-weight:normal;color:#444;transform:scaleX(0.840);">Name</div>
<div class="t" style="left:705.75px;top:158.91px;font-size:6.48px;font-weight:normal;color:#444;transform:scaleX(0.978);">Material</div>
<div class="t" style="left:738.15px;top:158.91px;font-size:6.48px;font-weight:normal;color:#444;transform:scaleX(0.940);">Linetype</div>
<div class="t" style="left:640.25px;top:168.93px;font-size:6.7px;font-weight:normal;color:#fff;transform:scaleX(0.990);">Default</div>
<div class="t" style="left:737.75px;top:168.93px;font-size:6.7px;font-weight:normal;color:#fff;transform:scaleX(0.863);">Continuo...</div>
<div class="t" style="left:639.75px;top:178.93px;font-size:6.7px;font-weight:bold;color:#111;transform:scaleX(0.954);">Weave</div>
<div class="t" style="left:737.75px;top:178.93px;font-size:6.7px;font-weight:bold;color:#111;transform:scaleX(0.892);">Continu...</div>
<div class="t" style="left:653.55px;top:102.03px;font-size:8.0px;font-weight:bold;color:#fff;transform:scaleX(0.817);">Amar Shetty</div>
</body></html>
